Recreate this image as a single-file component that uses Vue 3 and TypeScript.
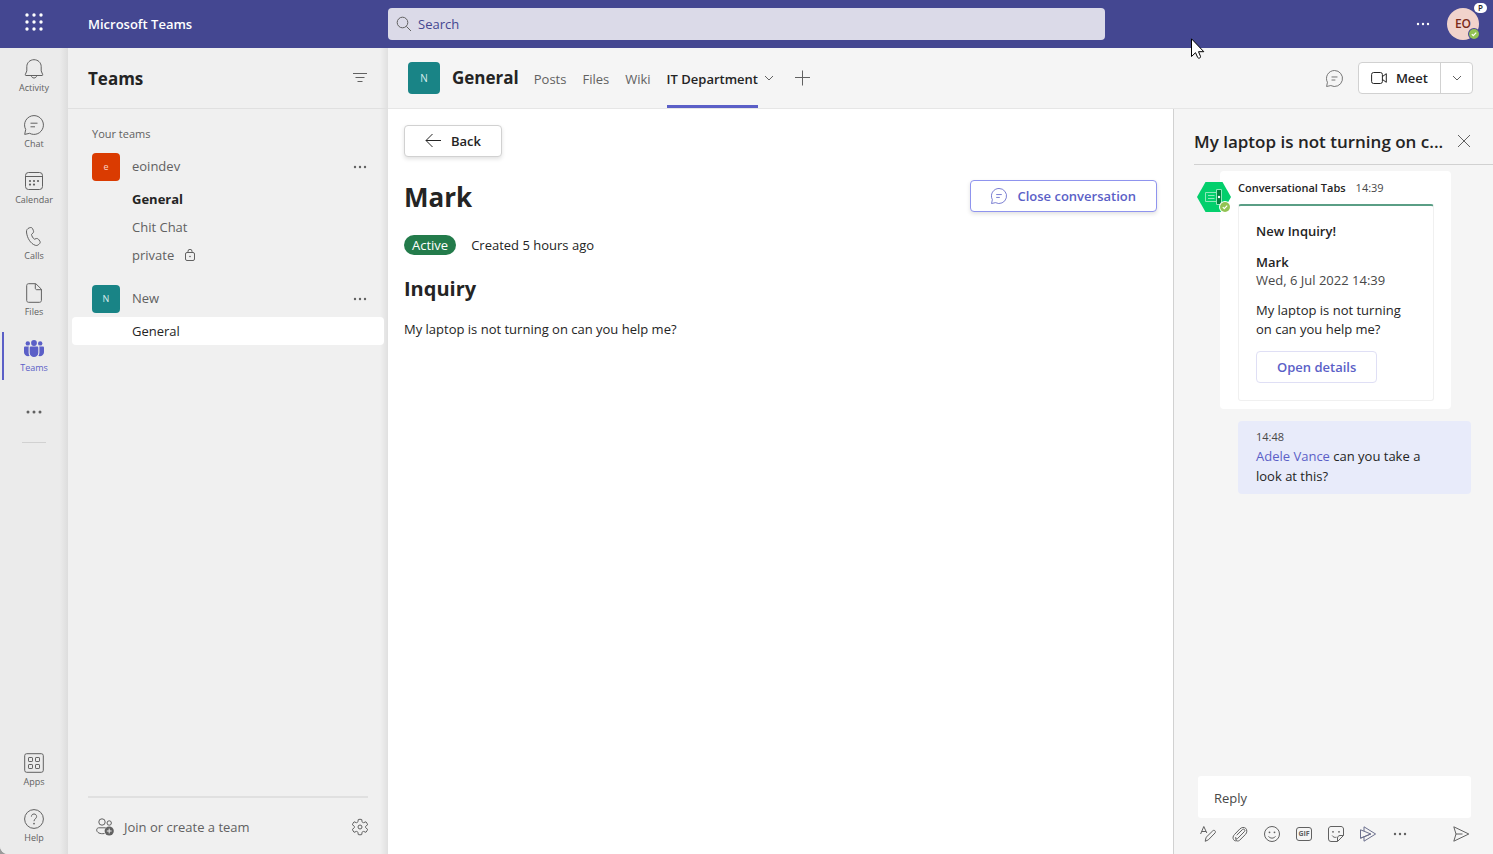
<script setup lang="ts">
import { ref } from 'vue'

interface Channel { name: string; strong?: boolean; locked?: boolean; selected?: boolean }
interface Team { name: string; letter: string; tone: string; channels: Channel[] }

const railItems = [
  { id: 'activity', label: 'Activity' },
  { id: 'chat', label: 'Chat' },
  { id: 'calendar', label: 'Calendar' },
  { id: 'calls', label: 'Calls' },
  { id: 'files', label: 'Files' },
  { id: 'teams', label: 'Teams' },
]
const railFooter = [
  { id: 'apps', label: 'Apps' },
  { id: 'help', label: 'Help' },
]
const teams: Team[] = [
  {
    name: 'eoindev', letter: 'e', tone: 'orange',
    channels: [
      { name: 'General', strong: true },
      { name: 'Chit Chat' },
      { name: 'private', locked: true },
    ],
  },
  { name: 'New', letter: 'N', tone: 'teal', channels: [{ name: 'General', selected: true }] },
]
const tabs = ['Posts', 'Files', 'Wiki']
const tools = [
  { id: 'format', label: 'Format' },
  { id: 'attach', label: 'Attach' },
  { id: 'emoji', label: 'Emoji' },
  { id: 'gif', label: 'Giphy' },
  { id: 'sticker', label: 'Sticker' },
  { id: 'stream', label: 'Stream' },
  { id: 'dots', label: 'More options' },
]
const search = ref('')
const reply = ref('')
</script>

<template>
  <div class="app">
    <svg class="defs" aria-hidden="true">
      <symbol id="i-activity" viewBox="0 0 20 20"><path d="M10 .7c-4 0-7.200 3-7.200 6.900v4.300L1.300 15.600c-.2.400.1.900.6.900h16.200c.5 0 .8-.5.600-.9l-1.500-3.700V7.600C17.200 3.700 14 .7 10 .7ZM7.300 16.600c.2 1.500 1.300 2.400 2.700 2.400s2.500-.9 2.700-2.400" /></symbol>
      <symbol id="i-chat" viewBox="0 0 20 20"><path d="M10 .6a9.400 9.400 0 1 1-4.400 17.700L.7 19.400l1-4.900A9.400 9.400 0 0 1 10 .6ZM6.500 8.200h7M6.500 11.800h4.500" /></symbol>
      <symbol id="i-calendar" viewBox="0 0 20 20"><rect x="1.500" y="1.500" width="17" height="17" rx="3" /><path d="M1.500 5.500h17" /><g class="solid"><circle cx="6" cy="10" r="1.100" /><circle cx="10" cy="10" r="1.100" /><circle cx="14" cy="10" r="1.100" /><circle cx="6" cy="13.600" r="1.100" /><circle cx="10" cy="13.600" r="1.100" /></g></symbol>
      <symbol id="i-calls" viewBox="0 0 20 20"><path d="m5.200.9 1-.3c1-.3 2 .2 2.400 1.100l.8 1.900c.4.900.2 1.900-.5 2.500L7.500 7.400c.2 1.600 1.400 3.800 2.900 4.800l1.800-.6c.9-.3 1.900.1 2.400.8l1.200 1.700c.6.800.5 1.800-.2 2.500l-.9.900c-.9.900-2.200 1.200-3.400.8C6.500 16.800 3 10.800 2.500 5 2.300 3.100 3.400 1.500 5.200.9Z" /></symbol>
      <symbol id="i-files" viewBox="0 0 20 20"><path d="M4.500.7h7.300l5.600 5.500v11.300c0 1-.8 1.800-1.800 1.800H4.500c-1 0-1.800-.8-1.800-1.800v-15c0-1 .8-1.800 1.800-1.800ZM11.300.8v4.300c0 1 .6 1.600 1.500 1.600h4.500" /></symbol>
      <symbol id="i-teams" viewBox="0 0 20 20"><g class="solid"><circle cx="10" cy="4" r="2.900" /><circle cx="3.800" cy="4.400" r="2.200" /><circle cx="16.200" cy="4.400" r="2.200" /><path d="M7 7.600h6c.7 0 1.300.5 1.300 1.200v4.900a4.300 4.300 0 0 1-8.600 0V8.800c0-.7.600-1.200 1.300-1.200ZM1.200 7.600h3.700c-.2.400-.3.800-.3 1.200v5c0 1.200.4 2.300 1 3.200C2.600 17.700 0 16 0 13.200V8.800c0-.7.500-1.200 1.200-1.200ZM18.800 7.600h-3.700c.2.400.3.800.3 1.200v5c0 1.200-.4 2.300-1 3.200 3 .7 5.600-1 5.600-3.800V8.800c0-.7-.5-1.200-1.200-1.200Z" /></g></symbol>
      <symbol id="i-more" viewBox="0 0 20 20"><g class="solid"><circle cx="4" cy="10" r="1.500" /><circle cx="10" cy="10" r="1.500" /><circle cx="16" cy="10" r="1.500" /></g></symbol>
      <symbol id="i-dots" viewBox="0 0 16 16"><g class="solid"><circle cx="3" cy="8" r="1.200" /><circle cx="8" cy="8" r="1.200" /><circle cx="13" cy="8" r="1.200" /></g></symbol>
      <symbol id="i-apps" viewBox="0 0 20 20"><rect x=".7" y=".7" width="18.600" height="18.600" rx="2" /><rect x="4.500" y="4.500" width="4" height="4" rx=".6" /><rect x="11.500" y="4.500" width="4" height="4" rx=".6" /><rect x="4.500" y="11.500" width="4" height="4" rx=".6" /><rect x="11.500" y="11.500" width="4" height="4" rx=".6" /></symbol>
      <symbol id="i-help" viewBox="0 0 20 20"><circle cx="10" cy="10" r="9.400" /><path d="M7.400 7.600C7.400 6 8.500 5 10 5s2.600 1 2.600 2.500c0 2.200-2.600 2.400-2.600 4.700" /><circle class="solid" cx="10" cy="14.600" r=".9" /></symbol>
      <symbol id="i-lock" viewBox="0 0 12 12"><rect x="1.500" y="3.500" width="9" height="8" rx="1.500" /><path d="M4 3.500V2.300a2 2 0 0 1 4 0v1.200" /><circle class="solid" cx="6" cy="7.500" r=".8" /></symbol>
      <symbol id="i-chevron" viewBox="0 0 10 10"><path d="m1 3 4 4 4-4" /></symbol>
      <symbol id="i-close" viewBox="0 0 14 14"><path d="m1 1 12 12M13 1 1 13" /></symbol>
      <symbol id="i-format" viewBox="0 0 16 16"><path d="M.6 8 3.800.5 6.800 7M1.700 5.500h4.400M5.200 15.300l.9-4 6.700-6.500c.6-.6 1.600-.6 2.200 0s.6 1.600 0 2.200l-6.600 6.800-3.200 1.500Z" /></symbol>
      <symbol id="i-attach" viewBox="0 0 16 16"><path d="m4.700 9.200 5.500-5.400c1.700-1.600 3.700.3 2 2l-6.600 6.700c-1.200 1.200-2.700.2-1.800-1.400M4 12.500c-.8 2.600 2.200 3.200 3.700 1.700l5.800-5.800c1.700-1.800 1.700-4.600.3-6s-4.200-1.200-5.900.5L2.500 8.500c-1.600 1.600-1.900 3.500-1 5 .7 1.300 1.900 1.400 3 1.400" /></symbol>
      <symbol id="i-emoji" viewBox="0 0 16 16"><circle cx="8" cy="8" r="7.500" /><path d="M4.500 10.400c1.800 2.300 5.200 2.300 7 0" /><g class="solid"><circle cx="5.500" cy="6.300" r=".9" /><circle cx="10.500" cy="6.300" r=".9" /></g></symbol>
      <symbol id="i-sticker" viewBox="0 0 16 16"><path d="M3 .5h10c1.400 0 2.500 1.100 2.500 2.500v6.500l-6 6H3A2.500 2.500 0 0 1 .5 13V3C.5 1.600 1.600.5 3 .5ZM9.500 15.300V12c0-1.400 1.100-2.500 2.500-2.500h3.400M4.200 9.500c1 1.800 2.700 2.200 4.300 1.700" /><g class="solid"><circle cx="5" cy="5.800" r=".9" /><circle cx="11" cy="5.800" r=".9" /></g></symbol>
      <symbol id="i-stream" viewBox="0 0 16 16"><path d="M4 .8 15.600 8 4 15.200v-4.400L10.800 8 4 5.200ZM4 5.200.5 3.800v8.400L4 10.800M.5 12.200 10.800 8" stroke="#6b6f8c" /></symbol>
      <symbol id="i-send" viewBox="0 0 16 16"><path d="m.8.800 15 7.200-15 7.200L3 8ZM3 8h6.500" /></symbol>
      <symbol id="i-status" viewBox="0 0 12 12"><circle cx="6" cy="6" r="5" fill="#92c353" stroke="none" /><path d="m3.800 6.100 1.500 1.500 2.900-3" stroke="#fff" stroke-width="1.200" /></symbol>
    </svg>

    <header class="topbar">
      <button class="plain waffle" aria-label="App launcher">
        <svg viewBox="0 0 18 18" width="18" height="18"><g class="solid">
          <template v-for="r in 3" :key="r"><circle v-for="c in 3" :key="c" :cx="c * 7 - 5" :cy="r * 7 - 5" r="1.700" /></template>
        </g></svg>
      </button>
      <span class="brand">Microsoft Teams</span>
      <label class="search">
        <svg viewBox="0 0 16 16" width="16" height="16"><circle cx="6.500" cy="6.500" r="5.300" /><path d="m10.400 10.400 4.600 4.600" /></svg>
        <input v-model="search" type="text" placeholder="Search" aria-label="Search" />
      </label>
      <div class="account">
        <button class="plain light" aria-label="Settings and more"><svg width="16" height="16"><use href="#i-dots" /></svg></button>
        <button class="plain me" aria-label="Account">EO
          <span class="tag">P</span>
          <svg class="status" width="12" height="12"><use href="#i-status" /></svg>
        </button>
      </div>
      <svg class="pointer" viewBox="0 0 14 22" width="14" height="22" aria-hidden="true"><path d="M.5.800v17.700l4-3.800 2.200 4.800c.5 1.200 3.400.6 2.800-1.100l-2-4.700h5.300Z" /></svg>
    </header>

    <div class="body">
      <nav class="rail" aria-label="Apps">
        <button v-for="item in railItems" :key="item.id" class="plain rail-item" :class="{ active: item.id === 'teams' }">
          <svg width="20" height="20"><use :href="'#i-' + item.id" /></svg>
          <span>{{ item.label }}</span>
        </button>
        <button class="plain rail-more" aria-label="More apps"><svg width="20" height="20"><use href="#i-more" /></svg></button>
        <hr class="rail-rule" />
        <span class="grow"></span>
        <button v-for="item in railFooter" :key="item.id" class="plain rail-item">
          <svg width="20" height="20"><use :href="'#i-' + item.id" /></svg>
          <span>{{ item.label }}</span>
        </button>
      </nav>

      <aside class="panel">
        <div class="panel-head">
          <h2>Teams</h2>
          <button class="plain" aria-label="Filter"><svg viewBox="0 0 16 16" width="16" height="16"><path d="M1 3.500h14M3.500 7.500h9M5.500 11.500h5" /></svg></button>
        </div>
        <div class="team-list">
          <p class="caption">Your teams</p>
          <section v-for="team in teams" :key="team.name" class="team">
            <div class="team-row">
              <span class="avatar" :class="team.tone">{{ team.letter }}</span>
              <span class="team-name">{{ team.name }}</span>
              <button class="plain" :aria-label="'More options for ' + team.name"><svg width="16" height="16"><use href="#i-dots" /></svg></button>
            </div>
            <button v-for="c in team.channels" :key="c.name" class="plain channel" :class="{ strong: c.strong, selected: c.selected }">
              {{ c.name }}<svg v-if="c.locked" width="12" height="12"><use href="#i-lock" /></svg>
            </button>
          </section>
        </div>
        <div class="panel-foot">
          <button class="plain join">
            <svg viewBox="0 0 18 18" width="18" height="18"><circle cx="6" cy="4" r="3.200" /><circle cx="13.200" cy="5" r="2.200" /><path d="M8.500 15.500C4 16.300.7 14.500.7 12c0-1.300.8-2.200 2-2.200h7" /><circle class="solid" cx="13.200" cy="13" r="4.600" /><path d="M13.200 10.600v4.800M10.800 13h4.800" stroke="#f0f0f0" /></svg>
            Join or create a team
          </button>
          <button class="plain" aria-label="Manage teams"><svg viewBox="1 0 16 18" width="16" height="18"><path d="M7.300 1.500c1.100-.3 2.300-.3 3.400 0l.4 2.200c.2.800 1 1.200 1.700.9l2.100-.8c.8.900 1.400 1.900 1.700 3l-1.700 1.300c-.7.500-.7 1.300 0 1.800l1.700 1.400c-.3 1.100-.9 2.100-1.700 3l-2.100-.8c-.8-.3-1.500.1-1.700.9l-.4 2.200c-1.100.3-2.300.3-3.400 0l-.4-2.200c-.2-.8-.9-1.200-1.700-.9l-2.100.8c-.8-.9-1.400-1.900-1.700-3l1.700-1.400c.7-.5.700-1.300 0-1.800L1.400 6.800c.3-1.100.9-2.100 1.700-3l2.100.8c.7.300 1.500-.1 1.700-.9Z" /><circle cx="9" cy="9" r="2" /></svg></button>
        </div>
      </aside>

      <div class="workspace">
        <div class="channel-head">
          <span class="avatar teal large">N</span>
          <h2>General</h2>
          <nav class="tabs" aria-label="Channel tabs">
            <a v-for="t in tabs" :key="t" href="#">{{ t }}</a>
            <a href="#" class="current" aria-current="page">IT Department</a>
          </nav>
          <button class="plain tab-menu" aria-label="Tab options"><svg width="10" height="10"><use href="#i-chevron" /></svg></button>
          <button class="plain add-tab" aria-label="Add a tab"><svg viewBox="0 0 16 16" width="16" height="16"><path d="M8.500.5v15M1 7.500h15" /></svg></button>
          <span class="grow"></span>
          <button class="plain" aria-label="Conversation"><svg width="17" height="17"><use href="#i-chat" /></svg></button>
          <div class="meet">
            <button><svg viewBox="0 0 16 14" width="16" height="14"><rect x=".6" y="1.500" width="10.800" height="11" rx="2" /><path d="m11.500 5.500 3.800-2.800v8.600l-3.800-2.800" /></svg>Meet</button>
            <button class="meet-menu" aria-label="Meeting options"><svg width="10" height="10"><use href="#i-chevron" /></svg></button>
          </div>
        </div>

        <div class="columns">
          <main class="content">
            <button class="button back"><svg viewBox="0 0 16 14" width="16" height="14"><path d="M16 6.500H1M7.500 0 1 6.500 7.500 13" /></svg>Back</button>
            <div class="title-row">
              <h1>Mark</h1>
              <button class="button close-conv"><svg width="16" height="16"><use href="#i-chat" /></svg>Close conversation</button>
            </div>
            <p class="meta"><span class="badge">Active</span>Created 5 hours ago</p>
            <h3>Inquiry</h3>
            <p class="inquiry">My laptop is not turning on can you help me?</p>
          </main>

          <aside class="thread">
            <div class="thread-head">
              <h2>My laptop is not turning on c...</h2>
              <button class="plain" aria-label="Close"><svg width="14" height="14"><use href="#i-close" /></svg></button>
            </div>
            <div class="messages">
              <article class="bot">
                <div class="bot-avatar">
                  <svg viewBox="0 0 34 30" width="34" height="30"><path d="M8.500 0h17L34 15l-8.500 15h-17L0 15Z" fill="#03cf6c" stroke="none" /><path d="M19.500 10.500h-11v9h11M11 13.500h6.500M11 16.500h6.500" stroke="#8fe9ba" /><path d="M19.500 7.500h5v15h-5Z" fill="#03823f" stroke="#8fe9ba" /><circle cx="22" cy="15" r="1.200" fill="#fff" stroke="none" /></svg>
                  <svg class="status" width="12" height="12"><use href="#i-status" /></svg>
                </div>
                <p class="byline"><b>Conversational Tabs</b><time>14:39</time></p>
                <div class="card">
                  <p class="semi">New Inquiry!</p>
                  <div class="who"><p class="semi">Mark</p><p class="when">Wed, 6 Jul 2022 14:39</p></div>
                  <p>My laptop is not turning on can you help me?</p>
                  <button>Open details</button>
                </div>
              </article>
              <article class="mine">
                <time>14:48</time>
                <p><a href="#">Adele Vance</a> can you take a look at this?</p>
              </article>
            </div>
            <div class="composer">
              <input v-model="reply" type="text" placeholder="Reply" aria-label="Reply" />
              <div class="tools">
                <button v-for="t in tools" :key="t.id" class="plain" :aria-label="t.label">
                  <span v-if="t.id === 'gif'" class="gif">GIF</span>
                  <svg v-else width="16" height="16"><use :href="'#i-' + t.id" /></svg>
                </button>
                <span class="grow"></span>
                <button class="plain" aria-label="Send"><svg width="16" height="16"><use href="#i-send" /></svg></button>
              </div>
            </div>
          </aside>
        </div>
      </div>
    </div>
  </div>
</template>

<style>
body { background: #9a9a9a; }
</style>

<style scoped>
.app {
  display: flex;
  flex-direction: column;
  min-height: 100vh;
  overflow: hidden;
  border-bottom-left-radius: 8px;
  background: #f5f5f5;
  color: #242424;
  font-family: "Open Sans", "Noto Sans", sans-serif;
  font-size: 13px;
  line-height: 20px;
}
.app * { box-sizing: border-box; }
h1, h2, h3, p, hr { margin: 0; }
button, input { font: inherit; color: inherit; }
button { cursor: pointer; }
a { color: inherit; text-decoration: none; }
svg { display: block; flex: none; fill: none; stroke: currentColor; stroke-width: 1; overflow: visible; }
.solid { fill: currentColor; stroke: none; }
.defs { position: absolute; width: 0; height: 0; }
.plain { display: flex; align-items: center; justify-content: center; padding: 0; border: 0; background: none; color: #616161; }
.grow { flex: 1; }

.topbar { position: relative; display: grid; grid-template-columns: 68px 320px minmax(0, 717px) 1fr; align-items: center; height: 48px; background: #444791; color: #fff; }
.waffle { color: #fff; padding-bottom: 4px; }
.brand { padding-left: 20px; font-weight: 600; }
.search { display: flex; align-items: center; gap: 6px; height: 32px; padding: 0 8px; border-radius: 4px; background: #dbdae8; color: #616161; }
.search input { flex: 1; min-width: 0; padding: 0; border: 0; outline: 0; background: none; color: #444791; }
.search input::placeholder { color: #444791; opacity: 1; }
.account { display: flex; align-items: center; justify-content: flex-end; gap: 16px; padding-right: 14px; }
.plain.light { color: #fff; }
.me { position: relative; width: 32px; height: 32px; border-radius: 50%; background: #f1d3cc; color: #7a2a1a; font-size: 12px; font-weight: 600; }
.tag { position: absolute; top: -5px; right: -8px; width: 13px; height: 10px; border-radius: 5px; background: #fff; color: #242424; font-size: 8px; line-height: 10px; }
.status { position: absolute; right: -1px; bottom: 0; border-radius: 50%; background: #444791; }
.pointer { position: absolute; z-index: 2; right: 288px; top: 38px; fill: #fff; stroke: #000; }

.body { display: flex; flex: 1; }
.rail { display: flex; flex-direction: column; flex: none; width: 68px; background: linear-gradient(to right, transparent 60px, #dddddd) #ebebeb; }
.rail-item { position: relative; flex-direction: column; justify-content: flex-start; gap: 2px; height: 56px; padding-top: 11px; font-size: 9px; line-height: 14px; }
.rail-item.active { color: #5b5fc7; }
.rail-item.active::before { content: ""; position: absolute; left: 2px; top: 4px; bottom: 4px; width: 2px; background: #5b5fc7; }
.rail-more { height: 56px; }
.rail-rule { width: 24px; margin: 2px auto 0; border: 0; border-top: 1px solid #d1d1d1; }

.panel { display: flex; flex-direction: column; flex: none; width: 320px; background: linear-gradient(to right, transparent 312px, #e0e0e0) #f0f0f0; }
.panel-head { display: flex; align-items: center; justify-content: space-between; height: 61px; padding: 0 20px; border-bottom: 1px solid #e0e0e0; }
h2 { font-size: 17px; line-height: 24px; font-weight: 700; }
.panel-head h2 { padding-top: 2px; }
.team-list { flex: 1; padding: 16px 4px; }
.caption { padding-left: 20px; margin-bottom: 6px; color: #616161; font-size: 11px; line-height: 18px; }
.team { margin-bottom: 12px; }
.team-row { display: flex; align-items: center; height: 36px; padding: 0 16px 0 20px; color: #616161; }
.team-name { flex: 1; padding: 0 0 2px 12px; }
.avatar { display: flex; align-items: center; justify-content: center; width: 28px; height: 28px; border-radius: 4px; color: #d8ecec; font-size: 9px; }
.avatar.large { width: 32px; height: 32px; font-size: 10px; }
.avatar.orange { background: #da3b01; color: #fbd5c8; }
.teal { background: #198486; }
.channel { justify-content: flex-start; gap: 10px; width: 100%; height: 28px; padding-left: 60px; border-radius: 4px; }
.channel.strong { color: #242424; font-weight: 700; }
.channel.selected { background: #fff; color: #242424; }
.panel-foot { display: flex; align-items: center; justify-content: space-between; height: 58px; margin: 0 20px; padding-top: 2px; border-top: 2px solid #e0e0e0; }
.join { gap: 10px; padding-left: 8px; }

.workspace { display: flex; flex-direction: column; flex: 1; min-width: 0; }
.channel-head { display: flex; align-items: center; height: 61px; padding: 0 20px; border-bottom: 1px solid #e6e6e6; }
.channel-head h2 { margin: 0 15px 0 12px; }
.tabs { display: flex; gap: 16px; height: 60px; color: #616161; }
.tabs a { padding-top: 21px; }
.tabs .current { border-bottom: 3px solid #5b5fc7; color: #242424; font-weight: 600; }
.tab-menu { margin: 0 20px 0 6px; }
.meet { display: flex; height: 32px; margin-left: 15px; border: 1px solid #d1d1d1; border-radius: 4px; background: #fff; }
.meet button { display: flex; align-items: center; justify-content: center; gap: 9px; padding: 0 12px; border: 0; background: none; font-weight: 600; }
.meet .meet-menu { width: 32px; padding: 0; border-left: 1px solid #d1d1d1; color: #616161; }

.columns { display: flex; flex: 1; }
.content { flex: 1; min-width: 0; padding: 16px; background: #fff; }
.button { display: flex; align-items: center; gap: 10px; height: 32px; padding: 0 20px; border: 1px solid #d1d1d1; border-radius: 4px; background: #fff; box-shadow: 0 2px 4px rgba(0, 0, 0, 0.12); font-weight: 600; }
.title-row { display: flex; align-items: center; justify-content: space-between; margin-top: 20px; height: 38px; }
h1 { font-size: 26px; line-height: 36px; font-weight: 700; padding-top: 2px; }
.close-conv { border-color: #8f94ee; color: #5b5fc7; }
.meta { display: flex; align-items: center; gap: 15px; margin-top: 20px; }
.badge { padding: 0 8px; border-radius: 10px; background: #237b4b; color: #fff; }
h3 { margin-top: 20px; font-size: 20px; line-height: 28px; font-weight: 700; }
.inquiry { margin-top: 16px; }

.thread { display: flex; flex-direction: column; flex: none; width: 320px; border-left: 1px solid #d1d1d1; }
.thread-head { display: flex; align-items: center; justify-content: space-between; height: 56px; margin-left: 20px; padding: 8px 22px 0 0; border-bottom: 1px solid #d1d1d1; }
.thread-head h2 { padding-top: 2px; font-weight: 600; white-space: nowrap; }
.messages { flex: 1; padding: 6px 22px 0 24px; }
.bot { position: relative; margin: 0 20px 0 22px; padding: 7px 17px 8px 18px; border-radius: 4px; background: #fff; }
.bot-avatar { position: absolute; left: -23px; top: 11px; }
.bot-avatar .status { right: 0; bottom: -1px; background: #fff; }
.byline { display: flex; gap: 10px; margin-bottom: 6px; font-size: 11px; }
.byline b { font-weight: 600; }
time { color: #484848; font-size: 11px; }
.card { display: flex; flex-direction: column; align-items: flex-start; gap: 12px; padding: 16px 16px 17px 17px; border: 1px solid #f0f0f0; border-top: 2px solid #5a9e85; border-radius: 3px; line-height: 19px; }
.semi { font-weight: 600; }
.who { line-height: 18px; }
.when { color: #484848; }
.card button { height: 32px; padding: 0 20px; border: 1px solid #dfdff5; border-radius: 4px; background: #fff; color: #5b5fc7; font-weight: 600; }
.mine { margin: 12px 0 0 40px; padding: 7px 36px 8px 18px; border-radius: 4px; background: #e8ebfa; }
.mine time { display: block; line-height: 18px; }
.mine a { color: #5b5fc7; }
.composer { padding: 0 22px 12px 24px; }
.composer input { width: 100%; height: 42px; padding: 2px 16px 0; border: 0; border-radius: 3px; outline: 0; background: #fff; }
.composer input::placeholder { color: #484848; opacity: 1; }
.tools { display: flex; gap: 16px; margin-top: 8px; padding: 0 2px; }
.gif { width: 16px; height: 14px; border: 1px solid currentColor; border-radius: 3px; font-size: 7px; line-height: 12px; font-weight: 700; }
</style>
